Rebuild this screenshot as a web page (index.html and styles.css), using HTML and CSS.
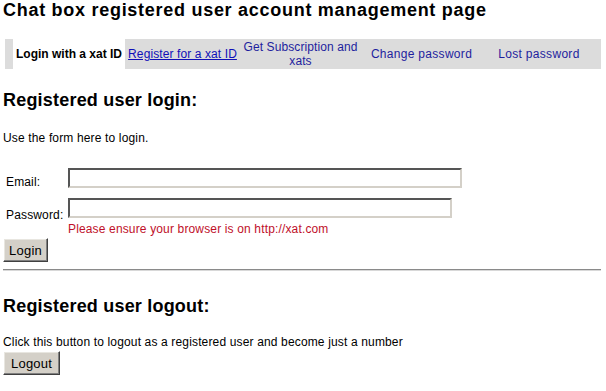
FILE: index.html
```html
<!DOCTYPE html>
<html>
<head>
    <title>Chat box registered user account management page</title>
    <link rel="stylesheet" href="styles.css">
</head>
<body>
    <h1 class="page-title">Chat box registered user account management page</h1>

    <div class="tabs">
        <div class="tab tab-active">Login with a xat ID</div>
        <div class="tab tab-register"><a href="#" class="tab-link underlined">Register for a xat ID</a></div>
        <div class="tab tab-subscription"><a href="#" class="tab-link">Get Subscription and xats</a></div>
        <div class="tab tab-change"><a href="#" class="tab-link">Change password</a></div>
        <div class="tab tab-lost"><a href="#" class="tab-link">Lost password</a></div>
    </div>

    <h2 class="section-title">Registered user login:</h2>
    <p class="intro">Use the form here to login.</p>

    <form class="login-form" onsubmit="return false;">
        <div class="form-row row-email">
            <label class="field-label label-email" for="email">Email:</label>
            <input type="text" id="email" class="text-input input-email">
        </div>
        <div class="form-row row-password">
            <label class="field-label label-password" for="password">Password:</label>
            <div class="field-box">
                <input type="password" id="password" class="text-input input-password">
                <div class="warning">Please ensure your browser is on http://xat.com</div>
            </div>
        </div>
        <button class="button btn-login">Login</button>
    </form>

    <hr class="divider">

    <h2 class="section-title logout-title">Registered user logout:</h2>
    <p class="intro logout-text">Click this button to logout as a registered user and become just a number</p>
    <button class="button btn-logout">Logout</button>
</body>
</html>
```

FILE: styles.css
```css
body {
    margin: 0 5px 0 3px;
    font-family: "Liberation Sans", Arial, sans-serif;
    font-size: 12px;
    letter-spacing: 0.15px;
    color: #000;
    background: #fff;
}
.page-title {
    font-size: 18px;
    line-height: 21px;
    letter-spacing: 0.72px;
    margin: 0;
}
.tabs {
    display: flex;
    align-items: stretch;
    height: 30px;
    margin: 18px 0 0 2px;
    padding-left: 8px;
    background-color: #dcdcdc;
}
.tab {
    box-sizing: border-box;
    display: flex;
    align-items: center;
    justify-content: center;
    text-align: center;
    line-height: 14px;
    padding: 0 1px;
    letter-spacing: 0.3px;
}
.tab-active {
    width: 112px;
    background-color: #fff;
    font-weight: bold;
    letter-spacing: 0;
}
.tab-register {
    width: 115px;
    letter-spacing: 0.1px;
}
.tab-subscription {
    width: 121px;
    letter-spacing: 0.1px;
}
.tab-change {
    width: 121px;
}
.tab-lost {
    width: 114px;
}
.tab-link {
    color: #1e1e9e;
    text-decoration: none;
}
.tab-link.underlined {
    color: #1010b8;
    text-decoration: underline;
}
.section-title {
    font-size: 18px;
    line-height: 21px;
    letter-spacing: 0.2px;
    margin: 21px 0 0 0;
}
.intro {
    line-height: 14px;
    margin: 20px 0 0 0;
}
.login-form {
    margin: 23px 0 0 0;
}
.form-row {
    display: flex;
    align-items: flex-start;
}
.row-email {
    margin-bottom: 9px;
}
.field-label {
    box-sizing: border-box;
    width: 65px;
    padding-left: 3px;
    line-height: 14px;
}
.label-email {
    padding-top: 7px;
}
.label-password {
    padding-top: 10px;
}
.text-input {
    box-sizing: border-box;
    height: 20px;
    margin: 0;
    padding: 1px 2px;
    border: 2px solid;
    border-color: #555 #d4d0c8 #d4d0c8 #555;
    font-family: "Liberation Sans", Arial, sans-serif;
    font-size: 12px;
    display: block;
}
.input-email {
    width: 394px;
}
.input-password {
    width: 384px;
}
.warning {
    color: #c0102a;
    line-height: 14px;
    margin-top: 4px;
}
.button {
    display: block;
    box-sizing: border-box;
    height: 24px;
    padding: 0 4px;
    margin: 2px 0 0 0;
    background-color: #d4d0c8;
    border: 1px solid;
    border-color: #fff #404040 #404040 #fff;
    box-shadow: inset -1px -1px #808080, inset 1px 1px #e8e6e0;
    font-family: "Liberation Sans", Arial, sans-serif;
    font-size: 13px;
    letter-spacing: 0.2px;
    color: #000;
    cursor: pointer;
}
.btn-login {
    width: 45px;
}
.btn-logout {
    width: 57px;
}
.divider {
    margin: 7px 0 0 0;
    border: none;
    border-top: 1px solid #8a8a8a;
    border-bottom: 1px solid #d8d8d8;
    height: 0;
}
.logout-title {
    margin-top: 25px;
}
.logout-text {
    margin-top: 18px;
}
```
